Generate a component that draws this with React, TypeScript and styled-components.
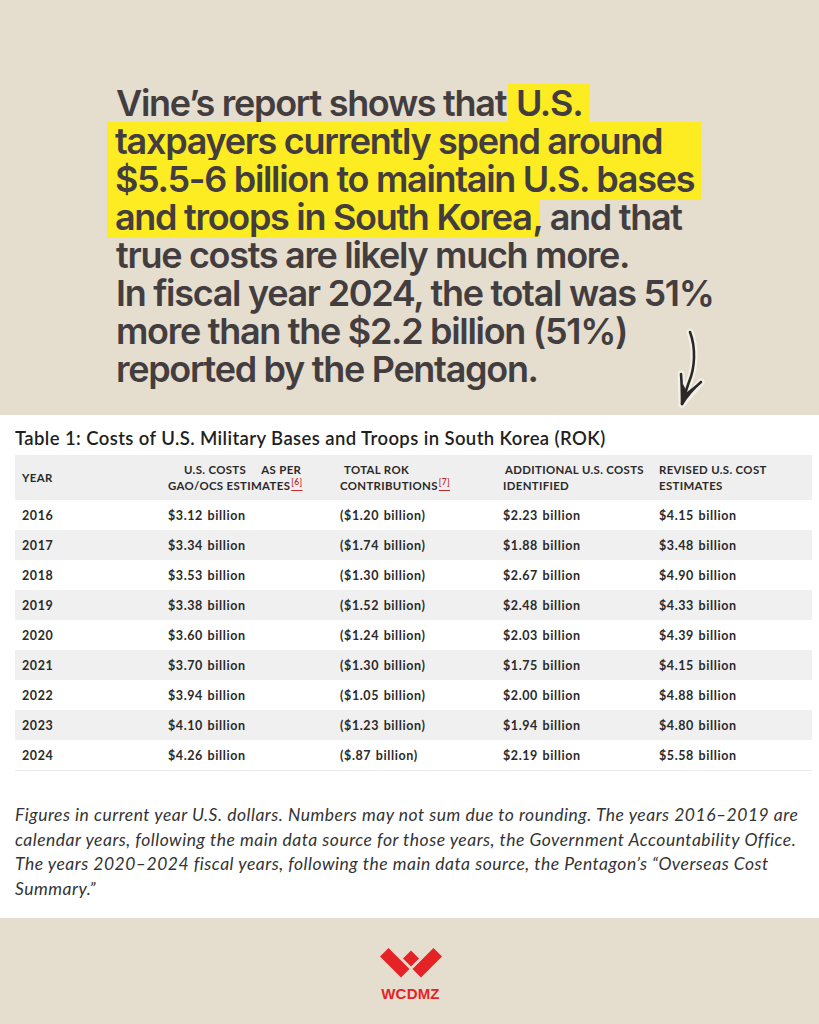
import styled, { createGlobalStyle } from "styled-components";

const GlobalStyle = createGlobalStyle`
  html, body {
    margin: 0;
    padding: 0;
    background: #e5dece;
  }
  * { box-sizing: border-box; }
`

type Row = {
  year: string
  costs: string
  rok: string
  additional: string
  revised: string
}

const rows: Row[] = [
  { year: '2016', costs: '$3.12 billion', rok: '($1.20 billion)', additional: '$2.23 billion', revised: '$4.15 billion' },
  { year: '2017', costs: '$3.34 billion', rok: '($1.74 billion)', additional: '$1.88 billion', revised: '$3.48 billion' },
  { year: '2018', costs: '$3.53 billion', rok: '($1.30 billion)', additional: '$2.67 billion', revised: '$4.90 billion' },
  { year: '2019', costs: '$3.38 billion', rok: '($1.52 billion)', additional: '$2.48 billion', revised: '$4.33 billion' },
  { year: '2020', costs: '$3.60 billion', rok: '($1.24 billion)', additional: '$2.03 billion', revised: '$4.39 billion' },
  { year: '2021', costs: '$3.70 billion', rok: '($1.30 billion)', additional: '$1.75 billion', revised: '$4.15 billion' },
  { year: '2022', costs: '$3.94 billion', rok: '($1.05 billion)', additional: '$2.00 billion', revised: '$4.88 billion' },
  { year: '2023', costs: '$4.10 billion', rok: '($1.23 billion)', additional: '$1.94 billion', revised: '$4.80 billion' },
  { year: '2024', costs: '$4.26 billion', rok: '($.87 billion)', additional: '$2.19 billion', revised: '$5.58 billion' },
]

export default function App() {
  return (
    <>
      <GlobalStyle />
      <Page>
        <Hero>
          <Headline>
            <Line>Vine’s report shows that <Mark $lead={false}>U.S.</Mark></Line>
            <Line><Mark $lead $width={594}>taxpayers currently spend around</Mark></Line>
            <Line><Mark $lead $width={594}>$5.5-6 billion to maintain U.S. bases</Mark></Line>
            <Line><Mark $lead $tight>and troops in South Korea</Mark>, and that</Line>
            <Line>true costs are likely much more.</Line>
            <Line>In fiscal year 2024, the total was 51%</Line>
            <Line>more than the $2.2 billion (51%)</Line>
            <Line>reported by the Pentagon.</Line>
          </Headline>
          <Arrow width="34" height="82" viewBox="0 0 34 82">
            <g fill="none" stroke="#f4f0e7" strokeWidth="7" strokeLinecap="round" strokeLinejoin="round">
              <path d="M16 4 C 22 20, 21 40, 15 54 C 12 62, 10 70, 8 76" />
              <path d="M7 46 L 8 76 L 27 54" />
            </g>
            <g fill="none" stroke="#2b2829" strokeWidth="2.6" strokeLinecap="round" strokeLinejoin="round">
              <path d="M16 4 C 22 20, 21 40, 15 54 C 12 62, 10 70, 8 76" />
              <path d="M7 46 C 8 58, 8 68, 8 76 C 13 68, 20 60, 27 54" />
            </g>
            <path d="M8 76 L 9 56 L 13 64 L 22 57 Z" fill="#2b2829" />
          </Arrow>
        </Hero>

        <Panel>
          <TableTitle>Table 1: Costs of U.S. Military Bases and Troops in South Korea (ROK)</TableTitle>
          <Table>
            <HeaderRow>
              <HeadCell>YEAR</HeadCell>
              <HeadCell>
                <Indent $size={16}>U.S. COSTS&nbsp;&nbsp;&nbsp;&nbsp; AS PER</Indent><br />
                GAO/OCS ESTIMATES<Ref>[6]</Ref>
              </HeadCell>
              <HeadCell>
                <Indent $size={4}>TOTAL ROK</Indent><br />
                CONTRIBUTIONS<Ref>[7]</Ref>
              </HeadCell>
              <HeadCell>
                <Indent $size={2}>ADDITIONAL U.S. COSTS</Indent><br />
                IDENTIFIED
              </HeadCell>
              <HeadCell>
                REVISED U.S. COST<br />
                ESTIMATES
              </HeadCell>
            </HeaderRow>
            {rows.map((r, i) => (
              <BodyRow key={r.year} $striped={i % 2 === 1}>
                <Cell>{r.year}</Cell>
                <Cell>{r.costs}</Cell>
                <Cell>{r.rok}</Cell>
                <Cell>{r.additional}</Cell>
                <Cell>{r.revised}</Cell>
              </BodyRow>
            ))}
          </Table>

          <Note>
            Figures in current year U.S. dollars. Numbers may not sum due to rounding. The years 2016–2019 are<br />
            calendar years, following the main data source for those years, the Government Accountability Office.<br />
            The years 2020–2024 fiscal years, following the main data source, the Pentagon’s “Overseas Cost<br />
            Summary.”
          </Note>
        </Panel>

        <Footer>
          <svg width="62" height="31" viewBox="0 0 62 31">
            <g fill="#e52326">
              <polygon points="0,8.5 8.5,0 29.5,21 21,29.5" />
              <polygon points="31,2.5 39,10.5 31,18.5 23,10.5" />
              <polygon points="62,8.5 53.5,0 32.5,21 41,29.5" />
            </g>
          </svg>
          <Brand>WCDMZ</Brand>
        </Footer>
      </Page>
    </>
  )
}

const Page = styled.div`
  width: 819px;
  height: 1024px;
  background: #e5dece;
  display: flex;
  flex-direction: column;
  overflow: hidden;
`

const Hero = styled.section`
  position: relative;
  height: 415px;
  padding: 84px 0 0 116px;
`

const Headline = styled.h1`
  margin: 0;
  font-family: Inter, "Liberation Sans", sans-serif;
  font-weight: 600;
  font-size: 36px;
  line-height: 38px;
  letter-spacing: -1.3px;
  color: #433d3f;
`

const Line = styled.div`
  height: 38px;
  white-space: nowrap;
`

const Mark = styled.span<{ $lead: boolean; $width?: number; $tight?: boolean }>`
  display: inline-block;
  height: 40px;
  margin-top: -1px;
  padding: 0 8px;
  margin-left: ${p => (p.$lead ? '-9px' : '-6px')};
  margin-right: ${p => (p.$tight ? '-7px' : '0')};
  background: #fdec22;
  width: ${p => (p.$width ? `${p.$width}px` : 'auto')};
`

const Arrow = styled.svg`
  position: absolute;
  left: 674px;
  top: 328px;
`

const Panel = styled.section`
  background: #ffffff;
  height: 503px;
  padding: 12px 7px 0 15px;
  display: flex;
  flex-direction: column;
`

const TableTitle = styled.h2`
  margin: 0 0 5px;
  font-family: Lato, "Noto Sans", sans-serif;
  font-weight: 600;
  font-size: 18.5px;
  line-height: 23px;
  letter-spacing: 0.4px;
  color: #1f1f1f;
`

const Table = styled.div`
  display: flex;
  flex-direction: column;
  border-bottom: 1px solid #ececec;
  font-family: Lato, "Noto Sans", sans-serif;
  color: #2a2a2a;
`

const columns = `146px 172px 163px 156px 1fr`

const HeaderRow = styled.div`
  display: grid;
  grid-template-columns: ${columns};
  align-items: center;
  height: 45px;
  padding-left: 7px;
  background: #efefef;
`

const HeadCell = styled.div`
  font-size: 11.4px;
  font-weight: 700;
  line-height: 16px;
  letter-spacing: 0.35px;
  white-space: nowrap;
`

const Indent = styled.span<{ $size: number }>`
  padding-left: ${p => p.$size}px;
`

const Ref = styled.span`
  position: relative;
  top: -5px;
  line-height: 0;
  color: #c4262b;
  font-size: 8.5px;
  font-weight: 600;
  text-decoration: underline;
  text-underline-offset: 5px;
  margin-left: 1px;
`

const BodyRow = styled.div<{ $striped: boolean }>`
  display: grid;
  grid-template-columns: ${columns};
  align-items: center;
  height: 30px;
  padding-left: 7px;
  background: ${p => (p.$striped ? '#f0f0f0' : '#ffffff')};
`

const Cell = styled.div`
  font-size: 12.5px;
  font-weight: 700;
  letter-spacing: 0.6px;
  word-spacing: 1px;
  white-space: nowrap;
`

const Note = styled.p`
  margin: 32px 0 0;
  font-family: Lato, "Noto Sans", sans-serif;
  font-style: italic;
  font-weight: 400;
  font-size: 17.5px;
  line-height: 24.5px;
  letter-spacing: 0.5px;
  color: #333333;
  white-space: nowrap;
`

const Footer = styled.footer`
  flex: 1;
  display: flex;
  flex-direction: column;
  align-items: center;
  padding: 30px 0 0 2px;
  gap: 6px;
`

const Brand = styled.div`
  font-family: "Liberation Sans", Arial, sans-serif;
  font-weight: 700;
  font-size: 15px;
  line-height: 17px;
  letter-spacing: 0.2px;
  color: #e52326;
`
